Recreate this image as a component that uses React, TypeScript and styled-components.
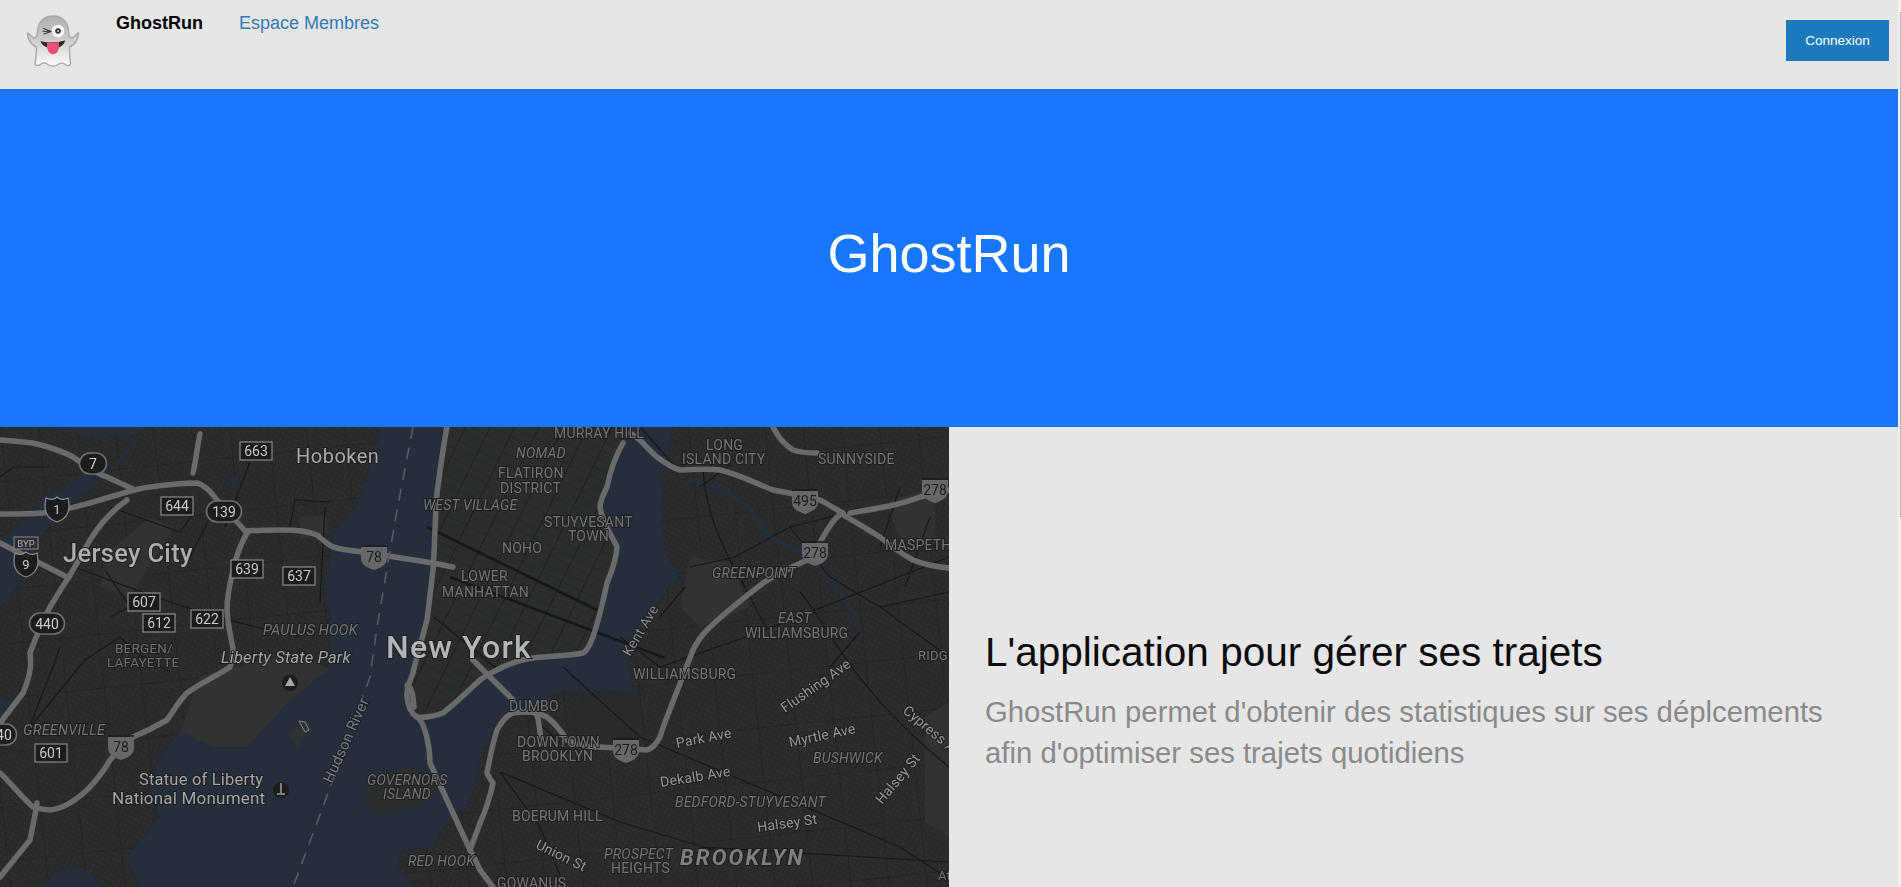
import React from "react";
import styled, { createGlobalStyle } from "styled-components";

const Global = createGlobalStyle`
  html, body { margin: 0; padding: 0; height: 100%; overflow: hidden; background: #e6e6e6; }
  body { font-family: "Liberation Sans", Arial, sans-serif; }
  #root { height: 100%; }
`;

const Frame = styled.div`
  display: flex;
  height: 887px;
  overflow: hidden;
`;
const Page = styled.main`
  flex: 1;
  min-width: 0;
  display: flex;
  flex-direction: column;
`;
const ScrollTrack = styled.div`
  width: 3px;
  background: #f1f1f1;
`;
const ScrollThumb = styled.div`
  height: 505px;
  margin: 12px 0 0 2px;
  background: #b5b5b5;
`;
const Header = styled.header`
  height: 89px;
  flex: none;
  display: flex;
  align-items: flex-start;
  background: #e6e6e6;
`;
const Logo = styled.svg`
  width: 54px;
  height: 54px;
  margin: 14px 0 0 26px;
  flex: none;
`;
const Nav = styled.nav`
  display: flex;
  gap: 36px;
  margin: 13px 0 0 36px;
  font-size: 18px;
  line-height: 20px;
`;
const Brand = styled.a`
  font-weight: 700;
  color: #000;
`;
const NavLink = styled.a`
  color: #337ab7;
`;
const LoginButton = styled.button`
  width: 103px;
  height: 41px;
  margin: 20px 9px 0 auto;
  padding: 0 0 1px;
  border: 0;
  background: #1a7abc;
  color: #fff;
  font: 13.5px "Liberation Sans", Arial, sans-serif;
`;
const Hero = styled.section`
  height: 338px;
  flex: none;
  box-sizing: border-box;
  padding-bottom: 10px;
  display: flex;
  align-items: center;
  justify-content: center;
  background: #1778ff;
`;
const HeroTitle = styled.h1`
  margin: 0;
  font-size: 54px;
  font-weight: 400;
  color: #fff;
`;
const Feature = styled.section`
  flex: 1;
  min-height: 0;
  display: grid;
  grid-template-columns: 949px 1fr;
  background: #e6e6e6;
`;
const MapFigure = styled.svg`
  display: block;
  width: 949px;
  height: 460px;
`;
const Copy = styled.div`
  padding: 88px 36px 0;
  display: flex;
  flex-direction: column;
  justify-content: center;
`;
const Heading = styled.h2`
  margin: 0 0 16px;
  font-size: 40.500px;
  line-height: 46px;
  font-weight: 400;
  color: #0a0a0a;
`;
const Lead = styled.p`
  margin: 0;
  font-size: 29.300px;
  line-height: 41px;
  color: #8a8a8a;
`;

const GhostLogo = () => (
  <Logo viewBox="0 0 54 54" aria-hidden="true">
    <defs>
      <linearGradient id="ghostFill" x1="0" y1="0" x2="0" y2="1">
        <stop offset="0" stopColor="#b0b0b0" />
        <stop offset="0.45" stopColor="#cacaca" />
        <stop offset="1" stopColor="#fcfcfc" />
      </linearGradient>
    </defs>
    <path
      d="M27 2C17 2 12 9 11.500 17C11.300 21 11 24 8 24C5 23 2.500 18 1.500 19C1 24 5 31 10.500 33C10.500 40 9.500 46 9 50C9.500 52 13 52 15 50C17.500 48.500 19.500 48.500 22 50.500C25 52.500 29 52.500 32 50.500C35 48.500 37 48.500 39.500 50.500C41 52 44 52 44.500 50C44 45 43.500 39 43.500 33C49 31 53 24 52.500 19C51.500 18 49 23 46 24C43 24 42.700 21 42.500 17C42 9 37 2 27 2Z"
      fill="url(#ghostFill)"
      stroke="#a8a8a8"
      strokeWidth="1.400"
      strokeLinejoin="round"
    />
    <circle cx="32" cy="17" r="6.300" fill="#f6f6f6" />
    <circle cx="32" cy="17" r="2.800" fill="#333" />
    <circle cx="32" cy="17" r="0.900" fill="#ddd" />
    <path d="M17.500 14.500L25 17.500M18 20L25 17.500M17 17.200L24 17.500" fill="none" stroke="#3a3a3a" strokeWidth="1.100" strokeLinecap="round" />
    <path d="M14.500 27C19 29 31 29 39 26.500C38.500 31 33 34.500 27 34.500C21 34.500 15.500 31.500 14.500 27Z" fill="#262626" />
    <path d="M21 28.500C25 29 29 28.700 33 28C33.500 32.500 33 40 27.200 40.200C21.500 40.400 20.700 33 21 28.500Z" fill="#ea4f79" />
  </Logo>
);

type Label = { x: number; y: number; t: string; s?: number; r?: number; i?: boolean; c?: string; ls?: number; w?: number };

const labels: Label[] = [
  { x: 296, y: 36, t: "Hoboken", s: 20, c: "#a9a9a9", ls: 0.5 },
  { x: 63, y: 135, t: "Jersey City", s: 25.500, c: "#adadad", ls: 0.3, w: 500 },
  { x: 263, y: 208, t: "PAULUS HOOK", s: 14.500, i: true },
  { x: 115, y: 226, t: "BERGEN/", s: 13.500, i: false, c: "#6f6f6f" },
  { x: 107, y: 240, t: "LAFAYETTE", s: 13.500, c: "#6f6f6f" },
  { x: 221, y: 236, t: "Liberty State Park", s: 16.500, i: true, c: "#a5a5a5" },
  { x: 386, y: 231, t: "New York", s: 32, c: "#b5b5b5", ls: 1.200, w: 500 },
  { x: 23, y: 308, t: "GREENVILLE", s: 14.500, i: true },
  { x: 139, y: 358, t: "Statue of Liberty", s: 16.500, c: "#a5a5a5" },
  { x: 112, y: 377, t: "National Monument", s: 17, c: "#a5a5a5" },
  { x: 367, y: 358, t: "GOVERNORS", s: 14, i: true },
  { x: 383, y: 372, t: "ISLAND", s: 14, i: true },
  { x: 408, y: 439, t: "RED HOOK", s: 14, i: true },
  { x: 423, y: 83, t: "WEST VILLAGE", s: 14, i: true },
  { x: 554, y: 11, t: "MURRAY HILL", s: 14 },
  { x: 516, y: 31, t: "NOMAD", s: 14, i: true },
  { x: 498, y: 51, t: "FLATIRON", s: 14 },
  { x: 500, y: 66, t: "DISTRICT", s: 14 },
  { x: 544, y: 100, t: "STUYVESANT", s: 14 },
  { x: 568, y: 114, t: "TOWN", s: 14 },
  { x: 502, y: 126, t: "NOHO", s: 14 },
  { x: 461, y: 154, t: "LOWER", s: 14 },
  { x: 442, y: 170, t: "MANHATTAN", s: 14 },
  { x: 706, y: 23, t: "LONG", s: 14 },
  { x: 682, y: 37, t: "ISLAND CITY", s: 14 },
  { x: 818, y: 37, t: "SUNNYSIDE", s: 14 },
  { x: 885, y: 123, t: "MASPETH", s: 14 },
  { x: 712, y: 151, t: "GREENPOINT", s: 14, i: true },
  { x: 778, y: 196, t: "EAST", s: 14, i: true },
  { x: 745, y: 211, t: "WILLIAMSBURG", s: 14 },
  { x: 633, y: 252, t: "WILLIAMSBURG", s: 14 },
  { x: 918, y: 233, t: "RIDG", s: 13 },
  { x: 509, y: 284, t: "DUMBO", s: 14 },
  { x: 517, y: 320, t: "DOWNTOWN", s: 14 },
  { x: 522, y: 334, t: "BROOKLYN", s: 14 },
  { x: 512, y: 394, t: "BOERUM HILL", s: 14 },
  { x: 604, y: 432, t: "PROSPECT", s: 14, i: true },
  { x: 611, y: 446, t: "HEIGHTS", s: 14 },
  { x: 680, y: 438, t: "BROOKLYN", s: 22, i: true, c: "#7f7f7f", ls: 2.200, w: 700 },
  { x: 675, y: 380, t: "BEDFORD-STUYVESANT", s: 14, i: true },
  { x: 813, y: 336, t: "BUSHWICK", s: 14, i: true },
  { x: 497, y: 461, t: "GOWANUS", s: 14 },
  { x: 938, y: 453, t: "At", s: 13 },
  { x: 677, y: 321, t: "Park Ave", s: 14, r: -11, c: "#979797" },
  { x: 661, y: 360, t: "Dekalb Ave", s: 14, r: -9, c: "#979797" },
  { x: 758, y: 405, t: "Halsey St", s: 14, r: -8, c: "#979797" },
  { x: 790, y: 320, t: "Myrtle Ave", s: 14, r: -12, c: "#979797" },
  { x: 785, y: 286, t: "Flushing Ave", s: 14, r: -35, c: "#979797" },
  { x: 882, y: 378, t: "Halsey St", s: 14, r: -50, c: "#979797" },
  { x: 902, y: 285, t: "Cypress Ave", s: 14, r: 40, c: "#979797" },
  { x: 535, y: 421, t: "Union St", s: 14, r: 26, c: "#979797" },
  { x: 630, y: 230, t: "Kent Ave", s: 14, r: -59, c: "#8a8a8a" },
  { x: 332, y: 357, t: "Hudson River", s: 15, r: -66, c: "#767e8a" },
];

const shields: { x: number; y: number; t: string; w?: number; kind: "box" | "oval" | "us" | "int" }[] = [
  { x: 256, y: 24, t: "663", kind: "box" },
  { x: 177, y: 79, t: "644", kind: "box" },
  { x: 247, y: 142, t: "639", kind: "box" },
  { x: 299, y: 149, t: "637", kind: "box" },
  { x: 144, y: 175, t: "607", kind: "box" },
  { x: 159, y: 196, t: "612", kind: "box" },
  { x: 207, y: 192, t: "622", kind: "box" },
  { x: 51, y: 326, t: "601", kind: "box" },
  { x: 93, y: 36, t: "7", kind: "oval", w: 27 },
  { x: 224, y: 84, t: "139", kind: "oval", w: 35 },
  { x: 47, y: 196, t: "440", kind: "oval", w: 35 },
  { x: 0, y: 307, t: "440", kind: "oval", w: 33 },
  { x: 57, y: 82, t: "1", kind: "us" },
  { x: 26, y: 137, t: "9", kind: "us" },
  { x: 374, y: 130, t: "78", kind: "int" },
  { x: 121, y: 320, t: "78", kind: "int" },
  { x: 805, y: 74, t: "495", kind: "int" },
  { x: 935, y: 63, t: "278", kind: "int" },
  { x: 815, y: 126, t: "278", kind: "int" },
  { x: 626, y: 323, t: "278", kind: "int" },
];

const highways = [
  "M0 13C15 14 25 15 33 16C50 20 62 24 73 30C85 38 95 46 107 50L133 62",
  "M0 87C15 87 30 87 43 86C70 83 95 74 117 68C130 64 140 61 150 60C165 58 180 56 197 56C205 58 212 66 217 73L247 106",
  "M247 104C258 103 270 103 283 103C295 103 308 104 317 108C322 112 327 117 333 120C343 123 353 124 363 125L433 136L453 140",
  "M247 106C240 118 236 130 233 143C229 160 227 172 227 183C228 200 231 210 233 222C233 230 232 235 230 240C215 250 200 256 187 266C178 275 173 285 167 293C155 300 145 305 133 310C125 316 117 325 110 333C103 345 95 355 87 363C75 374 62 382 50 383C42 383 37 381 33 380C20 368 10 355 0 346",
  "M37 376C35 390 32 402 30 413L0 450",
  "M0 116L67 150",
  "M127 73C110 85 98 100 90 113C82 127 75 140 67 153C60 163 55 172 50 180C42 195 36 210 30 226C31 235 32 245 23 266L0 296",
  "M200 7C197 20 196 34 193 46",
  "M447 0C443 20 440 45 437 66C435 90 435 115 433 143C431 160 429 178 427 193C422 212 416 232 413 246C408 258 406 265 407 270C408 280 412 287 417 290C425 295 430 320 430 336L470 423C474 430 477 436 480 443L493 460",
  "M407 258C412 260 413 268 414 280",
  "M480 396L470 423",
  "M480 396C485 385 490 370 493 356C490 352 488 349 487 346C490 330 493 315 497 303C502 294 507 288 513 286C525 284 537 285 547 290C555 296 561 304 567 313C578 318 588 320 600 320L647 323C653 321 657 316 660 310C662 304 664 297 667 290L693 223C697 215 702 208 707 203C725 185 745 170 763 156C775 148 792 140 807 133C813 128 818 120 823 110C827 103 832 95 837 90L843 86",
  "M537 288C539 295 540 302 541 316",
  "M850 86C875 82 900 78 920 70L949 63",
  "M840 86C855 95 868 102 880 110C892 120 902 127 913 133C925 138 938 140 949 141",
  "M843 86C835 82 828 77 820 73C805 68 788 66 773 63C755 56 738 47 720 43C705 41 692 43 680 43C672 41 665 36 657 30C650 24 645 18 640 13L630 6",
  "M773 0C778 10 785 18 793 23C802 26 810 26 817 26",
  "M623 16C615 30 610 45 607 60C603 68 600 74 600 80C602 95 610 105 617 120C616 135 611 146 607 156C603 175 598 195 593 210C590 218 587 224 583 226C568 229 550 229 533 231C520 233 508 237 497 243C490 246 485 249 480 253C470 262 458 274 443 286C435 289 425 291 417 290",
  "M473 233L513 273",
];

const arterials = [
  "M427 100L597 183",
  "M450 150L665 231",
  "M434 190L495 240",
  "M500 262L560 315",
  "M563 240L640 310L900 420L949 452",
  "M620 210L660 240L760 205L949 130",
  "M703 43C705 75 715 110 745 160C755 180 760 190 766 200",
  "M690 140L735 130L790 100L830 90L860 80",
  "M660 190L685 160",
  "M790 100L830 150L880 180L949 230",
  "M800 165C830 200 850 260 949 340",
  "M880 180L949 165",
  "M700 420L949 435",
  "M500 345L540 400L565 460",
  "M500 345L620 395L720 425",
  "M74 140C130 160 200 190 300 210",
  "M110 80L180 105L195 85",
  "M215 80L185 140",
  "M290 100L295 73L330 75",
  "M0 50L14 40L50 40",
  "M30 300L85 233L120 210L135 225L170 245",
  "M225 100L250 35",
  "M60 220C50 250 40 270 30 300",
  "M325 80L320 175",
  "M105 143L130 180L110 190",
  "M640 0L680 45",
  "M700 60L730 38",
  "M860 205L830 240",
  "M900 60L880 120",
  "M930 90L905 160",
];

const MANHATTAN =
  "M447 0L437 66L433 143L427 193L413 246L407 270L417 290L443 286L480 253L497 243L533 231L583 226L593 210L607 156L617 120L600 80L607 60L623 16L632 0Z";

const MapArt = () => (
  <MapFigure viewBox="0 0 949 460" aria-label="Carte de New York">
    <defs>
      <pattern id="blocks" width="5" height="5" patternUnits="userSpaceOnUse" patternTransform="rotate(28)">
        <path d="M0 0H5M0 0V5" stroke="#242526" strokeWidth="0.7" fill="none" />
      </pattern>
      <pattern id="streets" width="38" height="54" patternUnits="userSpaceOnUse" patternTransform="rotate(-6)">
        <path d="M0 0H38M0 0V54" stroke="#1f2021" strokeWidth="1" fill="none" />
      </pattern>
      <pattern id="avenues" width="22" height="9" patternUnits="userSpaceOnUse" patternTransform="rotate(26)">
        <path d="M0 0V9" stroke="#18191a" strokeWidth="1.300" fill="none" />
        <path d="M0 0H22" stroke="#222324" strokeWidth="0.800" fill="none" />
      </pattern>
      <filter id="soft" x="0" y="0" width="100%" height="100%">
        <feGaussianBlur stdDeviation="0.55" />
      </filter>
      <filter id="softText" x="-5%" y="-20%" width="110%" height="140%">
        <feGaussianBlur stdDeviation="0.3" />
      </filter>
    </defs>
    <g filter="url(#soft)">
      <rect width="949" height="460" fill="#2c2d2e" />
      <rect width="949" height="460" fill="url(#blocks)" />
      <rect width="949" height="460" fill="url(#streets)" />
      {/* parks before water */}
      <path d="M885 75L935 60V115L900 110Z" fill="#333333" />
      <path d="M690 130L730 135L750 180L700 200L680 180Z" fill="#303030" />
      <path d="M925 290L949 275V410L925 395Z" fill="#303030" />
      <path d="M300 90L326 88L330 105L300 112Z" fill="#323232" />
      <path d="M108 125L150 90L175 100L130 170L100 160Z" fill="#303030" />
      <path d="M590 255L640 270L640 320L560 312Z" fill="#2c2c2c" />
      {/* Liberty State Park and shoreline land */}
      <path d="M200 250L295 225L330 243L293 270L247 320L213 320L180 305Z" fill="#333333" />
      {/* water */}
      <path
        d="M380 0L378 13L357 80L333 106L326 160L332 200L328 243L293 270L247 320L213 320L180 305L160 330L150 360L160 390L127 430L140 460H413L397 443L400 423L433 420L440 403L470 373L483 323L500 286L533 280L560 263L597 263L633 266L627 223L647 193L667 160L680 150L665 126L662 93L662 53L673 0Z"
        fill="#262e3b"
      />
      <path d="M53 3C80 6 110 12 140 6L145 0H50ZM140 6C132 25 118 38 105 50C85 68 65 80 47 100C30 125 25 155 0 180V110C15 108 28 85 45 70C70 60 95 35 110 43Z" fill="#262e3b" />
      <path d="M0 270V290L14 285L8 272Z" fill="#262e3b" />
      <path d="M43 460L60 443L90 443L100 460Z" fill="#262e3b" />
      <path d="M230 53L238 47L240 58L232 62Z" fill="#262e3b" />
      <path d="M690 52C720 60 745 72 760 95C770 118 795 120 817 132" fill="none" stroke="#262e3b" strokeWidth="4" />
      <path d="M823 140C835 165 855 180 860 205" fill="none" stroke="#262e3b" strokeWidth="3" />
      {/* islands */}
      <path d="M365 365C375 345 410 335 430 345C448 352 440 375 400 385C380 392 362 385 365 365Z" fill="#2c2d2e" />
      <path d="M288 305L305 293L312 302L297 322Z" fill="#2f3030" />
      {/* Manhattan */}
      <path d={MANHATTAN} fill="#2c2d2e" />
      <path d={MANHATTAN} fill="url(#avenues)" />
      {/* streets */}
      {arterials.map((d, i) => (
        <path key={i} d={d} fill="none" stroke="#18191a" strokeWidth={i < 2 ? 2.600 : 1.200} />
      ))}
      {/* highways */}
      {highways.map((d, i) => (
        <path key={i} d={d} fill="none" stroke="#6a6a6a" strokeWidth="5.500" strokeLinecap="round" strokeLinejoin="round" />
      ))}
      <path
        d="M413 0L397 83L377 200L370 250L333 353L293 460"
        fill="none"
        stroke="#585b61"
        strokeWidth="1.600"
        strokeDasharray="12 9"
      />
      {/* point markers */}
      <circle cx="290" cy="256" r="8" fill="#1a1b1c" />
      <path d="M290 250L295 259H285Z" fill="#a8a8a8" />
      <circle cx="281" cy="363" r="8" fill="#1a1b1c" />
      <path d="M281 356V366M277 367H285" stroke="#a0a0a0" strokeWidth="1.500" fill="none" />
      <path d="M299 294L305 295L309 303L305 305Z" fill="none" stroke="#888" strokeWidth="1" />
    </g>
    {/* labels */}
    <g filter="url(#softText)">
      {labels.map((l, i) => (
        <text
          key={i}
          x={l.x}
          y={l.y}
          fontFamily="Roboto, 'Liberation Sans', sans-serif"
          fontSize={l.s ?? 14}
          fontStyle={l.i ? "italic" : "normal"}
          fontWeight={l.w ?? 400}
          fill={l.c ?? "#757575"}
          letterSpacing={l.ls ?? 0.2}
          stroke="#1e1f20"
          strokeWidth="2"
          paintOrder="stroke"
          transform={l.r ? `rotate(${l.r} ${l.x} ${l.y})` : undefined}
        >
          {l.t}
        </text>
      ))}
      {/* shields */}
      {shields.map((s, i) => {
        const common = { fontFamily: "Roboto, 'Liberation Sans', sans-serif", textAnchor: "middle" as const };
        if (s.kind === "box")
          return (
            <g key={i}>
              <rect x={s.x - 16} y={s.y - 9} width="32" height="18" fill="#1a1b1c" stroke="#8a8a8a" strokeWidth="1.200" />
              <text x={s.x} y={s.y + 5} fontSize="14" fill="#c8c8c8" {...common}>{s.t}</text>
            </g>
          );
        if (s.kind === "oval")
          return (
            <g key={i}>
              <rect x={s.x - (s.w ?? 30) / 2} y={s.y - 10} width={s.w} height="21" rx="10.500" fill="#1a1b1c" stroke="#6e6e6e" strokeWidth="1.600" />
              <text x={s.x} y={s.y + 5.500} fontSize="14" fill="#cdcdcd" {...common}>{s.t}</text>
            </g>
          );
        if (s.kind === "us")
          return (
            <g key={i}>
              <path d={`M${s.x - 11} ${s.y - 11}C${s.x - 7} ${s.y - 9} ${s.x - 3} ${s.y - 9} ${s.x} ${s.y - 12}C${s.x + 3} ${s.y - 9} ${s.x + 7} ${s.y - 9} ${s.x + 11} ${s.y - 11}C${s.x + 14} ${s.y + 2} ${s.x + 10} ${s.y + 10} ${s.x} ${s.y + 13}C${s.x - 10} ${s.y + 10} ${s.x - 14} ${s.y + 2} ${s.x - 11} ${s.y - 11}Z`} fill="#1a1b1c" stroke="#8a8a8a" strokeWidth="1.200" />
              <text x={s.x} y={s.y + 5} fontSize="13" fill="#c8c8c8" {...common}>{s.t}</text>
            </g>
          );
        return (
          <g key={i}>
            <path d={`M${s.x - 13} ${s.y - 10}H${s.x + 13}V${s.y + 1}C${s.x + 13} ${s.y + 8} ${s.x + 6} ${s.y + 11} ${s.x} ${s.y + 13}C${s.x - 6} ${s.y + 11} ${s.x - 13} ${s.y + 8} ${s.x - 13} ${s.y + 1}Z`} fill="#666767" />
            <path d={`M${s.x - 13} ${s.y - 11}H${s.x + 13}`} stroke="#1a1b1c" strokeWidth="1.500" />
            <text x={s.x} y={s.y + 5} fontSize="14" fill="#1d1e1f" {...common}>{s.t}</text>
          </g>
        );
      })}
      <rect x="14" y="110" width="24" height="12" fill="#2e2f30" stroke="#8a8a8a" strokeWidth="1" />
      <text x="26" y="120" fontSize="9.500" textAnchor="middle" fill="#b0b0b0" fontFamily="Roboto, sans-serif">BYP</text>
    </g>
  </MapFigure>
);

export default function App() {
  return (
    <>
      <Global />
      <Frame>
        <Page>
          <Header>
            <GhostLogo />
            <Nav>
              <Brand>GhostRun</Brand>
              <NavLink>Espace Membres</NavLink>
            </Nav>
            <LoginButton>Connexion</LoginButton>
          </Header>
          <Hero>
            <HeroTitle>GhostRun</HeroTitle>
          </Hero>
          <Feature>
            <MapArt />
            <Copy>
              <Heading>L'application pour gérer ses trajets</Heading>
              <Lead>
                GhostRun permet d'obtenir des statistiques sur ses déplcements afin d'optimiser ses trajets quotidiens
              </Lead>
            </Copy>
          </Feature>
        </Page>
        <ScrollTrack>
          <ScrollThumb />
        </ScrollTrack>
      </Frame>
    </>
  );
}
